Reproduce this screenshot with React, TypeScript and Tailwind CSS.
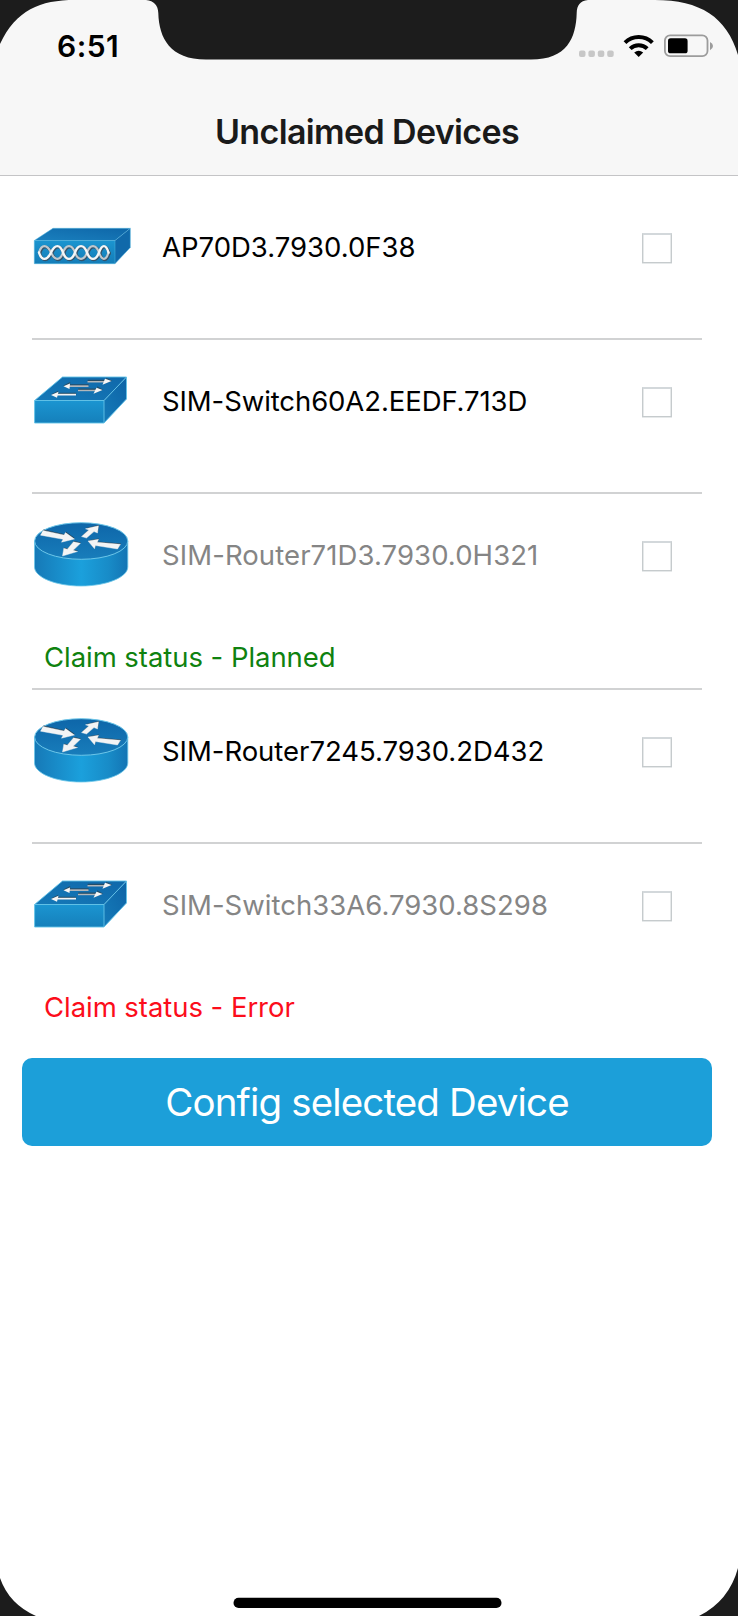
import React from "react";

type Kind = "ap" | "switch" | "router";
type Device = { name: string; kind: Kind; track: string; claimed?: boolean; status?: string; tone?: string };

const devices: Device[] = [
  { name: "AP70D3.7930.0F38", kind: "ap", track: "tracking-[0px]" },
  { name: "SIM-Switch60A2.EEDF.713D", kind: "switch", track: "tracking-[-0.09px]" },
  { name: "SIM-Router71D3.7930.0H321", kind: "router", track: "tracking-[0.09px]", claimed: true, status: "Claim status - Planned", tone: "text-[#0f820f]" },
  { name: "SIM-Router7245.7930.2D432", kind: "router", track: "tracking-[-0.03px]" },
  { name: "SIM-Switch33A6.7930.8S298", kind: "switch", track: "tracking-[0.02px]", claimed: true, status: "Claim status - Error", tone: "text-[#fc0d1b]" },
];

function AccessPointIcon() {
  const wave = "M19 37.5 C21.5 29 27 29 31 37.5 S40 46 43 37.5 S52 29 55 37.5 S64 46 67 37.5 S76 29 79 37.5 S86 46 88.5 37.5";
  const mirror = "M19 37.5 C21.5 46 27 46 31 37.5 S40 29 43 37.5 S52 46 55 37.5 S64 29 67 37.5 S76 46 79 37.5 S86 29 88.5 37.5";
  return (
    <svg width="125" height="60" viewBox="0 0 125 60">
      <defs>
        <linearGradient id="apTop" x1="0" y1="1" x2="1" y2="0"><stop offset="0" stopColor="#1a80be" /><stop offset="1" stopColor="#0e66a8" /></linearGradient>
        <linearGradient id="apFront" x1="0" y1="0" x2="0" y2="1"><stop offset="0" stopColor="#1b95d0" /><stop offset="1" stopColor="#147db8" /></linearGradient>
      </defs>
      <path d="M14.3 25.5 L33 13.3 H110.3 L95 25.5Z" fill="url(#apTop)" />
      <path d="M95 25.5 L110.3 13.3 V32.5 L95 48.7Z" fill="#1069aa" />
      <path d="M14.3 25.5 H95 V48.7 H14.3Z" fill="url(#apFront)" />
      <path d="M14.3 25.5 H95 V48.7 H14.3Z M14.3 25.5 L33 13.3 H110.3 L95 25.5 M110.3 13.3 V32.5 L95 48.7" fill="none" stroke="#4fb4df" strokeWidth=".5" />
      <g fill="none" strokeLinecap="round">
        <path d={wave} stroke="#35536a" strokeWidth="3" transform="translate(.8 .8)" />
        <path d={mirror} stroke="#35536a" strokeWidth="3" transform="translate(.8 .8)" />
        <path d={wave} stroke="#bfc8ce" strokeWidth="2.2" />
        <path d={mirror} stroke="#f4f6f7" strokeWidth="2.4" />
      </g>
    </svg>
  );
}

function SwitchIcon() {
  return (
    <svg width="125" height="70" viewBox="0 0 125 70">
      <defs>
        <linearGradient id="swTop" x1="0" y1="1" x2="1" y2="0"><stop offset="0" stopColor="#1579b8" /><stop offset="1" stopColor="#0f68aa" /></linearGradient>
        <linearGradient id="swFront" x1="0" y1="0" x2="0" y2="1"><stop offset="0" stopColor="#1b95d1" /><stop offset="1" stopColor="#1580bb" /></linearGradient>
        <linearGradient id="swSide" x1="0" y1="1" x2="1" y2="0"><stop offset="0" stopColor="#157bb9" /><stop offset="1" stopColor="#0d63a6" /></linearGradient>
      </defs>
      <path d="M14.6 35.5 L42.5 12 H106.5 L84 35.5Z" fill="url(#swTop)" />
      <path d="M84 35.5 L106.5 12 V34 L84 58Z" fill="url(#swSide)" />
      <path d="M14.6 35.5 H84 V58 H14.6Z" fill="url(#swFront)" />
      <path d="M14.6 35.5 H84 V58 H14.6Z M14.6 35.5 L42.5 12 H106.5 L84 35.5 M106.5 12 V34 L84 58" fill="none" stroke="#62c3e8" strokeWidth=".9" />
      <g fill="#2e4350" fillOpacity=".75" transform="translate(.2 -.7)">
        <path d="M67.5 15.5 H86 V13.5 L92 16.5 L84 19.5 V17.3 H67.5Z" />
        <path d="M68.5 20 H50 V17.8 L43 21.3 L49 24 V21.8 H68.5Z" />
        <path d="M58 24.2 H77 V22 L83 25.5 L75 28.5 V26.2 H58Z" />
        <path d="M56 28.5 H38 V26.5 L31 30 L37 32.5 V30.5 H56Z" />
      </g>
      <g fill="#b3b7ba">
        <path d="M67.5 16 H84 V17.5 H67.5Z" />
        <path d="M68.5 20.3 H49 V22 H68.5Z" />
        <path d="M58 24.8 H77 V26.2 H58Z" />
        <path d="M56 28.8 H37 V30.5 H56Z" fill="#f2f3f4" />
      </g>
      <g fill="#f6f6f6">
        <path d="M85 13.8 L91.5 16 L82.5 19.8Z" />
        <path d="M43.5 21.3 L50 18.4 L49.5 24Z" />
        <path d="M76.5 22.8 L82.5 25 L73.5 28.8Z" />
        <path d="M31 30 L38.5 26.8 L37 32.8Z" />
      </g>
    </svg>
  );
}

function RouterIcon() {
  const arrows = (
    <>
      <path d="M23 20.4 L44 25 L45.5 22.6 L54.5 29 L41.5 32.2 L43 29.3 L20.5 25.2Z" />
      <path d="M61.5 26.6 L68.8 20 L65.5 18.8 L78.5 15.8 L77.5 23 L74 21.6 L66.5 28Z" />
      <path d="M68 31 L78.5 29.3 L77.3 32.2 L100.5 34.3 L97.5 39 L75.5 35.5 L74.5 38.8Z" />
      <path d="M53.5 31.8 L60.5 33.3 L53.2 40.3 L57.5 41.5 L42.5 46 L43.8 38.2 L47.3 39.2Z" />
    </>
  );
  return (
    <svg width="125" height="90" viewBox="0 0 125 90">
      <defs>
        <linearGradient id="rtSide"><stop offset="0" stopColor="#1679b7" /><stop offset=".5" stopColor="#1ba0dc" /><stop offset=".8" stopColor="#188bc7" /><stop offset="1" stopColor="#1374b4" /></linearGradient>
        <linearGradient id="rtTop" x1="0" y1="0" x2="0" y2="1"><stop offset="0" stopColor="#0e66a9" /><stop offset="1" stopColor="#187dbb" /></linearGradient>
      </defs>
      <path d="M14.5 31 V57 C14.5 67 35 76 61 76 S107.8 67 107.8 57 V31Z" fill="url(#rtSide)" stroke="#6cc6e9" strokeWidth=".8" />
      <ellipse cx="61.2" cy="31" rx="46.6" ry="18.3" fill="url(#rtTop)" stroke="#6cc6e9" strokeWidth="1" />
      <g fill="#1f3d52" transform="translate(.5 -.8)">{arrows}</g>
      <g fill="#f3f4f5" stroke="#f3f4f5" strokeWidth=".4">{arrows}</g>
    </svg>
  );
}

function DeviceIcon({ kind }: { kind: Kind }) {
  if (kind === "ap") return <div className="mt-[29px] h-[60px]"><AccessPointIcon /></div>;
  if (kind === "switch") return <div className="mt-[25px] h-[70px]"><SwitchIcon /></div>;
  return <div className="mt-4 h-[90px]"><RouterIcon /></div>;
}

function DeviceRow({ device, last }: { device: Device; last: boolean }) {
  const height = last ? "h-[214px]" : device.status ? "h-[196px] border-b-2" : "h-[154px] border-b-2";
  return (
    <li className={`ml-8 mr-9 flex flex-col border-[#d1d2d3] ${height}`}>
      <div className="flex h-[120px] shrink-0 items-start">
        <div className="-ml-3 w-[125px] shrink-0"><DeviceIcon kind={device.kind} /></div>
        <span className={`ml-[17px] mt-[45px] text-[27.5px] leading-8 whitespace-nowrap ${device.track} ${device.claimed ? "text-[#858585]" : "text-black"}`}>{device.name}</span>
        <button aria-label={`Select ${device.name}`} className="ml-auto mr-[30px] mt-[47px] size-[30px] shrink-0 border border-t-2 border-[#c6cbcd] border-t-[#d3d8db] shadow-[0_1px_0_#e6e9ea,inset_1px_0_0_#e6e9ea,inset_-1px_0_0_#e6e9ea]" />
      </div>
      {device.status && <p className={`ml-3 mt-[27px] text-[27.5px] leading-8 tracking-[-0.05px] whitespace-nowrap ${device.tone}`}>{device.status}</p>}
    </li>
  );
}

function StatusIcons() {
  return (
    <svg width="138" height="30" viewBox="575 30 138 30">
      <g fill="#c7c7c7">
        <rect x="579" y="50.5" width="6.5" height="6.5" rx="2" />
        <rect x="588.4" y="50.5" width="6.5" height="6.5" rx="2" />
        <rect x="597.8" y="50.5" width="6.5" height="6.5" rx="2" />
        <rect x="607.2" y="50.5" width="6.5" height="6.5" rx="2" />
      </g>
      <g fill="none" stroke="#000" strokeWidth="4">
        <path d="M625 42.6 A19.5 19.5 0 0 1 652.4 42.6" />
        <path d="M630.2 48.6 A12.3 12.3 0 0 1 647.2 48.6" />
      </g>
      <path d="M634.2 52.6 Q638.7 48.8 643.2 52.6 L638.7 57Z" />
      <rect x="664.9" y="35.4" width="42.6" height="20.8" rx="5.2" fill="none" stroke="#9c9c9c" strokeWidth="1.8" />
      <rect x="668" y="38.3" width="19.6" height="15" rx="2.6" />
      <path d="M710 42 Q713 43.5 713 46 T710 50.2Z" fill="#9c9c9c" />
    </svg>
  );
}

export default function App() {
  return (
    <main className="relative flex h-[1616px] w-[738px] flex-col overflow-hidden bg-white font-['Inter',sans-serif]">
      <header className="flex h-44 shrink-0 flex-col border-b border-[#c4c4c6] bg-[#f7f7f7]">
        <div className="flex h-[62px] items-start justify-between pl-[57px] pr-[25px] pt-[30px]">
          <time className="text-[30px] leading-8 font-semibold tracking-[0.5px] text-black">6:51</time>
          <StatusIcons />
        </div>
        <h1 className="mt-[50px] pr-[4px] text-center text-[34px] leading-10 font-semibold tracking-[-0.64px] text-[#1a1a1a]">Unclaimed Devices</h1>
      </header>
      <ul className="flex flex-col pt-[10px]">
        {devices.map((d, i) => <DeviceRow key={d.name} device={d} last={i === devices.length - 1} />)}
      </ul>
      <button className="ml-[22px] mr-[26px] h-[88px] shrink-0 rounded-[10px] bg-[#1c9fd9] pt-[2px] text-[38.5px] tracking-[-0.86px] text-white">Config selected Device</button>
      <svg className="pointer-events-none absolute inset-x-0 top-0" width="738" height="61" viewBox="0 0 738 61" fill="#1c1c1c" aria-hidden="true">
        <path d="M0 0 H75 C40 0 16 10 0 44Z" />
        <path d="M146 0 C154 1 158 5 158.3 13 C159 38 170 59.6 206 59.6 H531 C567 59.6 576 38 576.7 13 C577 5 580 1 588 0Z" />
        <path d="M655 0 H738 V55 C727 17 700 0 655 0Z" />
      </svg>
      <svg className="pointer-events-none absolute bottom-0 left-0" width="738" height="50" viewBox="0 0 738 50" aria-hidden="true">
        <path d="M0 12 Q9 38 36 50 H0Z M738 2 Q729 35 699 50 H738Z" fill="#1c1c1c" />
        <rect x="233.5" y="31.7" width="268" height="10.3" rx="5.1" fill="#000" />
      </svg>
    </main>
  );
}
